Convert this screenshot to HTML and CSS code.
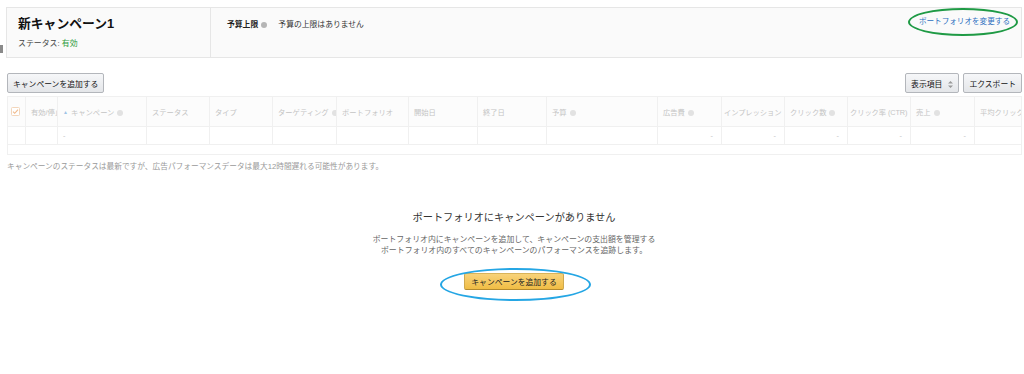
FILE: index.html
```html
<!DOCTYPE html>
<html lang="ja">
<head>
    <meta charset="UTF-8">
    <meta name="viewport" content="width=device-width, initial-scale=1.0">
    <title>ポートフォリオ</title>
    <link rel="stylesheet" href="styles.css">
</head>
<body>

    <div class="side-tab"></div>

    <div class="page">
        <section class="summary">
            <div class="summary-main">
                <h1 class="summary-title">新キャンペーン1</h1>
                <div class="summary-status">ステータス: <span class="status-on">有効</span></div>
            </div>
            <div class="summary-budget">
                <span class="budget-label">予算上限</span><span class="info dark"></span>
                <span class="budget-value">予算の上限はありません</span>
            </div>
            <a href="#" class="change-link">ポートフォリオを変更する</a>
        </section>

        <div class="toolbar">
            <button class="btn">キャンペーンを追加する</button>
            <div class="toolbar-right">
                <button class="btn">表示項目
                    <svg class="updown" width="5" height="7" viewBox="0 0 5 7"><path d="M2.5 0L5 2.6H0z M2.5 7L0 4.4H5z" fill="#999"/></svg>
                </button>
                <button class="btn">エクスポート</button>
            </div>
        </div>

        <table class="campaigns">
            <colgroup>
                <col style="width:18px"><col style="width:32px"><col style="width:89px"><col style="width:63px">
                <col style="width:63px"><col style="width:64px"><col style="width:72px"><col style="width:69px">
                <col style="width:69px"><col style="width:111px"><col style="width:64px"><col style="width:63px">
                <col style="width:63px"><col style="width:63px"><col style="width:64px"><col>
            </colgroup>
            <thead>
                <tr>
                    <th class="check-cell">
                        <svg width="9" height="9" viewBox="0 0 9 9"><rect x="0.5" y="0.5" width="8" height="8" rx="1" fill="#fff" stroke="#f3d6bb"/><path d="M2 4.6l1.7 1.7L7 2.6" fill="none" stroke="#f0b98a" stroke-width="1.1"/></svg>
                    </th>
                    <th>有効/停止</th>
                    <th><span class="sort">▲</span>キャンペーン<span class="info"></span></th>
                    <th>ステータス</th>
                    <th>タイプ</th>
                    <th>ターゲティング<span class="info"></span></th>
                    <th>ポートフォリオ</th>
                    <th>開始日</th>
                    <th>終了日</th>
                    <th>予算<span class="info"></span></th>
                    <th>広告費<span class="info"></span></th>
                    <th class="tight">インプレッション</th>
                    <th>クリック数<span class="info"></span></th>
                    <th class="tight">クリック率 (CTR)</th>
                    <th>売上<span class="info"></span></th>
                    <th>平均クリック単価</th>
                </tr>
            </thead>
            <tbody>
                <tr class="data-row">
                    <td></td>
                    <td></td>
                    <td>-</td>
                    <td></td>
                    <td></td>
                    <td></td>
                    <td></td>
                    <td></td>
                    <td></td>
                    <td></td>
                    <td class="num">-</td>
                    <td class="num">-</td>
                    <td class="num">-</td>
                    <td class="num">-</td>
                    <td class="num">-</td>
                    <td></td>
                </tr>
                <tr class="blank-row"><td colspan="16"></td></tr>
            </tbody>
        </table>

        <p class="note">キャンペーンのステータスは最新ですが、広告パフォーマンスデータは最大12時間遅れる可能性があります。</p>

        <div class="empty">
            <h2 class="empty-title">ポートフォリオにキャンペーンがありません</h2>
            <p class="empty-text">ポートフォリオ内にキャンペーンを追加して、キャンペーンの支出額を管理する<br>ポートフォリオ内のすべてのキャンペーンのパフォーマンスを追跡します。</p>
            <button class="btn btn-primary">キャンペーンを追加する</button>
        </div>
    </div>

    <div class="mark mark-green"></div>
    <div class="mark mark-blue"></div>

</body>
</html>
```

FILE: styles.css
```css
body {
    margin: 0;
    font-family: "Liberation Sans", "Noto Sans CJK JP", sans-serif;
    font-size: 8px;
    color: #111;
    background: #fff;
}
.side-tab {
    position: absolute;
    left: 0;
    top: 45px;
    width: 3px;
    height: 8px;
    background: #8a8a8a;
}
.page {
    padding: 7px 2px 0 6px;
}
.summary {
    display: flex;
    height: 49px;
    border: 1px solid #e6e6e6;
    background: #fafafa;
}
.summary-main {
    width: 192px;
    padding: 8px 0 0 11px;
    border-right: 1px solid #e6e6e6;
}
.summary-title {
    margin: 0;
    font-size: 12.8px;
    line-height: 15px;
    font-weight: bold;
    color: #111;
}
.summary-status {
    margin-top: 8px;
    font-size: 7.9px;
    line-height: 10px;
    color: #444;
}
.status-on {
    color: #2f9a41;
}
.summary-budget {
    flex: 1;
    padding: 12px 0 0 16px;
    font-size: 7.8px;
    line-height: 10px;
    color: #333;
}
.budget-label {
    font-weight: bold;
    color: #222;
}
.budget-value {
    margin-left: 9px;
}
.change-link {
    padding: 9px 11px 0 0;
    font-size: 7.6px;
    line-height: 10px;
    color: #2d6fbf;
    text-decoration: none;
}
.info {
    display: inline-block;
    width: 6px;
    height: 6px;
    margin-left: 3px;
    border-radius: 50%;
    background: #e2e2e2;
    vertical-align: -1px;
}
.info.dark {
    background: #b5b5b5;
}
.toolbar {
    display: flex;
    justify-content: space-between;
    margin-top: 15px;
    padding-left: 1px;
}
.toolbar-right {
    display: flex;
    gap: 4px;
}
.btn {
    height: 20px;
    padding: 0 5px;
    border: 1px solid #b3b6bb;
    border-radius: 2px;
    background: linear-gradient(#f6f7f9, #e4e6e9);
    font-family: inherit;
    font-size: 7.8px;
    color: #111;
    white-space: nowrap;
}
.updown {
    margin-left: 4px;
    vertical-align: -1px;
}
.campaigns {
    width: 1015px;
    margin: 3px 0 0 1px;
    border-collapse: collapse;
    table-layout: fixed;
    color: #c4c4c4;
    font-size: 7.3px;
}
.campaigns th,
.campaigns td {
    padding: 0 0 0 5px;
    border: 1px solid #f0f0f0;
    white-space: nowrap;
    overflow: hidden;
    text-align: left;
    font-weight: normal;
}
.campaigns th.tight {
    padding-left: 2px;
    letter-spacing: -0.1px;
}
.campaigns thead tr {
    height: 30px;
    background: #fcfcfc;
}
.campaigns th.check-cell {
    padding: 0 0 0 3px;
}
.check-cell svg {
    display: block;
}
.sort {
    margin-right: 3px;
    font-size: 5px;
    color: #9fc3e6;
    vertical-align: 1px;
}
.data-row {
    height: 18px;
}
.campaigns td.num {
    padding: 0 8px 0 0;
    text-align: right;
}
.blank-row {
    height: 10px;
}
.note {
    margin: 7px 0 0 1px;
    font-size: 7.7px;
    line-height: 10px;
    color: #9a9a9a;
}
.empty {
    margin-top: 40px;
    text-align: center;
}
.empty-title {
    margin: 0;
    font-size: 10.2px;
    line-height: 12px;
    font-weight: normal;
    color: #333;
}
.empty-text {
    margin: 10px 0 0;
    font-size: 7.9px;
    line-height: 11px;
    color: #666;
}
.btn-primary {
    width: 100px;
    height: 17px;
    margin-top: 17px;
    padding: 0;
    border-color: #d8b35a #cfa94e #b38a2f;
    background: linear-gradient(#f8d27a, #f0bd45);
    font-size: 7.8px;
    color: #222;
}
.mark {
    position: absolute;
    border-radius: 50%;
    box-sizing: border-box;
}
.mark-green {
    left: 908px;
    top: 8px;
    width: 110px;
    height: 28px;
    border: 2px solid #1f9a45;
}
.mark-blue {
    left: 440px;
    top: 268px;
    width: 151px;
    height: 33px;
    border: 2px solid #25a6e4;
}
```
